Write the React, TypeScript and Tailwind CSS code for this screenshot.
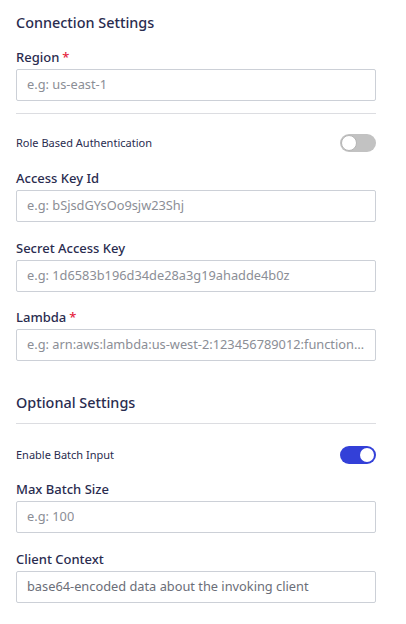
import React from "react";

const font = { fontFamily: '"Noto Sans", "Open Sans", sans-serif' };

function Field({ label, required, placeholder, dark }: { label: string; required?: boolean; placeholder: string; dark?: boolean }) {
  return (
    <div className="flex flex-col">
      <div className="text-[13px] leading-[16px] font-medium text-[#2a2c4f] h-[16px] whitespace-nowrap">
        {label}
        {required && <span className="text-[#e5253c] ml-[3px]">*</span>}
      </div>
      <div className="mt-[4px] h-[32px] border border-[#ccd0d7] rounded-[2px] flex items-center px-[10px] bg-white">
        <span className={`text-[12.8px] whitespace-nowrap overflow-hidden text-ellipsis ${dark ? "text-[#6b6e78]" : "text-[#8b8e96]"}`}>{placeholder}</span>
      </div>
    </div>
  );
}

function Toggle({ on }: { on: boolean }) {
  return on ? (
    <div className="w-[36px] h-[18px] rounded-full bg-[#3340d8] flex items-center justify-end pr-[2px]">
      <div className="w-[14px] h-[14px] rounded-full bg-white" />
    </div>
  ) : (
    <div className="w-[36px] h-[18px] rounded-full bg-[#c2c2c2] flex items-center pl-[1px]">
      <div className="w-[16px] h-[16px] rounded-full bg-white border border-[#b5b5b5]" />
    </div>
  );
}

export default function App() {
  return (
    <div style={font} className="w-[406px] h-[624px] bg-white pl-[16px] pr-[30px] pt-[13px]">
      <div className="text-[14.4px] leading-[20px] font-medium text-[#2a2c4f]">Connection Settings</div>
      <div className="mt-[16px]">
        <Field label="Region" required placeholder="e.g: us-east-1" />
      </div>
      <div className="mt-[12px] h-px bg-[#dcdde1]" />
      <div className="mt-[20px] flex items-center justify-between h-[18px]">
        <span className="text-[11px] text-[#2a2c4f]">Role Based Authentication</span>
        <Toggle on={false} />
      </div>
      <div className="mt-[18px]">
        <Field label="Access Key Id" placeholder="e.g: bSjsdGYsOo9sjw23Shj" />
      </div>
      <div className="mt-[18px]">
        <Field label="Secret Access Key" placeholder="e.g: 1d6583b196d34de28a3g19ahadde4b0z" />
      </div>
      <div className="mt-[17px]">
        <Field label="Lambda" required placeholder="e.g: arn:aws:lambda:us-west-2:123456789012:function:my-function" />
      </div>
      <div className="mt-[32px] text-[14.4px] leading-[20px] font-medium text-[#2a2c4f]">Optional Settings</div>
      <div className="mt-[10px] h-px bg-[#dcdde1]" />
      <div className="mt-[22px] flex items-center justify-between h-[18px]">
        <span className="text-[11px] text-[#2a2c4f]">Enable Batch Input</span>
        <Toggle on={true} />
      </div>
      <div className="mt-[17px]">
        <Field label="Max Batch Size" placeholder="e.g: 100" />
      </div>
      <div className="mt-[18px]">
        <Field label="Client Context" placeholder="base64-encoded data about the invoking client" dark />
      </div>
    </div>
  );
}
